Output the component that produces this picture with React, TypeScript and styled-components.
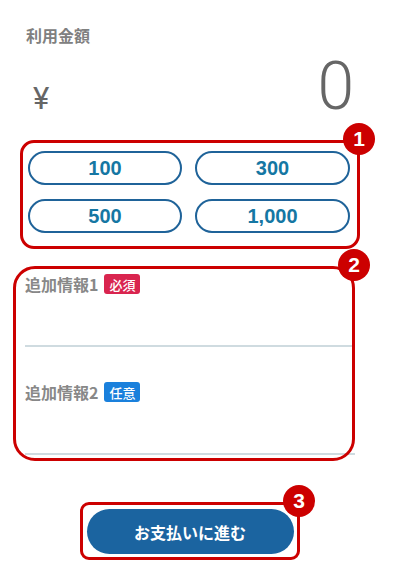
import React from "react";
import styled, { createGlobalStyle } from "styled-components";

const GlobalStyle = createGlobalStyle`
  html, body { margin: 0; padding: 0; background: #fff; }
  body { font-family: "Noto Sans CJK JP", "Liberation Sans", sans-serif; }
  * { box-sizing: border-box; }
`;

const Page = styled.div`
  width: 330px;
  margin-left: 25px;
  padding-top: 23px;
  padding-bottom: 18px;
`;

const SectionLabel = styled.div`
  font-family: "Noto Sans CJK JP", sans-serif;
  font-size: 16px;
  line-height: 24px;
  font-weight: 700;
  color: #808080;
  margin-left: 1px;
`;

const AmountRow = styled.div`
  display: flex;
  justify-content: space-between;
  align-items: baseline;
  margin-top: 7px;
  color: #666;
  font-family: Roboto, "Liberation Sans", sans-serif;
`;

const Yen = styled.span`
  font-size: 31px;
  font-weight: 400;
  line-height: 1;
  margin-left: 8px;
`;

const Value = styled.span`
  font-size: 66px;
  font-weight: 300;
  line-height: 1;
  margin-right: 1px;
`;

const Annotated = styled.div`
  position: relative;
`;

const Frame = styled.div<{ $t: number; $r: number; $b: number; $l: number; $radius: number }>`
  position: absolute;
  top: ${(p) => p.$t}px;
  right: ${(p) => p.$r}px;
  bottom: ${(p) => p.$b}px;
  left: ${(p) => p.$l}px;
  border: 3px solid #cc0000;
  border-radius: ${(p) => p.$radius}px;
  pointer-events: none;
`;

const Marker = styled.div`
  position: absolute;
  top: -20px;
  right: -18px;
  width: 32px;
  height: 32px;
  border-radius: 50%;
  background: #cc0000;
  color: #fff;
  font-family: "Liberation Sans", Arial, sans-serif;
  font-weight: 700;
  font-size: 21px;
  display: flex;
  align-items: center;
  justify-content: center;
`;

const PresetGrid = styled.div`
  display: grid;
  grid-template-columns: 154px 155px;
  column-gap: 13px;
  row-gap: 14px;
  margin: 31px 5px 0 3px;
`;

const PresetButton = styled.button`
  height: 34px;
  border: 2px solid #1f6399;
  border-radius: 17px;
  background: #fff;
  color: #1577a3;
  font-family: "Liberation Sans", Arial, sans-serif;
  font-weight: 700;
  font-size: 20px;
  padding: 0;
  cursor: pointer;
`;

const Fields = styled.div`
  margin-top: 39px;
  display: flex;
  flex-direction: column;
  gap: 33px;
`;

const Field = styled.div`
  display: flex;
  flex-direction: column;
`;

const FieldLabelRow = styled.div`
  display: flex;
  align-items: center;
  height: 24px;
  gap: 6px;
`;

const FieldLabel = styled.span`
  font-family: "Noto Sans CJK JP", sans-serif;
  font-size: 16px;
  line-height: 24px;
  font-weight: 700;
  color: #888;
`;

const Tag = styled.span<{ $kind: "required" | "optional" }>`
  display: inline-flex;
  align-items: center;
  justify-content: center;
  width: 36px;
  height: 20px;
  border-radius: 3px;
  background: ${(p) => (p.$kind === "required" ? "#d9254f" : "#1a80dc")};
  color: #fff;
  font-family: "Noto Sans CJK JP", sans-serif;
  font-size: 13px;
  font-weight: 500;
`;

const FieldInput = styled.input`
  height: 51px;
  border: none;
  border-bottom: 2px solid #cfdbe0;
  outline: none;
  background: transparent;
  font-size: 16px;
  padding: 0;
`;

const SubmitWrap = styled.div`
  display: flex;
  justify-content: center;
  margin-top: 54px;
`;

const SubmitButton = styled.button`
  width: 207px;
  height: 45px;
  border: none;
  border-radius: 23px;
  background: #1b64a0;
  color: #fff;
  font-family: "Noto Sans CJK JP", sans-serif;
  font-weight: 700;
  font-size: 16px;
  cursor: pointer;
`;

const presets = ["100", "300", "500", "1,000"];

export default function App() {
  return (
    <>
      <GlobalStyle />
      <Page>
        <SectionLabel>利用金額</SectionLabel>
        <AmountRow>
          <Yen>¥</Yen>
          <Value>0</Value>
        </AmountRow>

        <Annotated>
          <PresetGrid>
            {presets.map((p) => (
              <PresetButton key={p}>{p}</PresetButton>
            ))}
          </PresetGrid>
          <Frame $t={-11} $r={-5} $b={-16} $l={-5} $radius={14}>
            <Marker>1</Marker>
          </Frame>
        </Annotated>

        <Annotated>
          <Fields>
            <Field>
              <FieldLabelRow>
                <FieldLabel>追加情報1</FieldLabel>
                <Tag $kind="required">必須</Tag>
              </FieldLabelRow>
              <FieldInput />
            </Field>
            <Field>
              <FieldLabelRow>
                <FieldLabel>追加情報2</FieldLabel>
                <Tag $kind="optional">任意</Tag>
              </FieldLabelRow>
              <FieldInput />
            </Field>
          </Fields>
          <Frame $t={-6} $r={0} $b={-6} $l={-12} $radius={22}>
            <Marker>2</Marker>
          </Frame>
        </Annotated>

        <Annotated>
          <SubmitWrap>
            <SubmitButton>お支払いに進む</SubmitButton>
          </SubmitWrap>
          <Frame $t={-7} $r={55} $b={-6} $l={55} $radius={9}>
            <Marker>3</Marker>
          </Frame>
        </Annotated>
      </Page>
    </>
  );
}
